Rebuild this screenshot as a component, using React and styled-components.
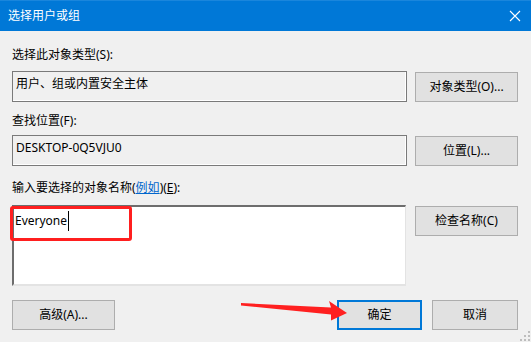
import React from "react";
import styled, { createGlobalStyle } from "styled-components";

const Global = createGlobalStyle`
  html, body { margin: 0; padding: 0; background: #f0f0f0; }
  * { box-sizing: border-box; }
`;

const FONT = `"Noto Sans", "Noto Sans CJK SC", sans-serif`;

const Window = styled.div`
  position: relative;
  width: 531px;
  height: 342px;
  overflow: hidden;
  background: #f0f0f0;
  font-family: ${FONT};
  font-size: 12px;
  color: #000;
`;

const TitleBar = styled.div`
  height: 31px;
  background: #0078d7;
  border-top: 1px solid #1a86dc;
  display: flex;
  align-items: center;
  justify-content: space-between;
  padding: 0 10px 0 8px;
`;

const Title = styled.span`
  color: #fff;
  font-size: 12px;
  line-height: 16px;
`;

const Body = styled.div`
  padding: 0 13px 0 12px;
  display: flex;
  flex-direction: column;
`;

const Label = styled.div`
  height: 16px;
  line-height: 16px;
  margin-top: ${(p) => p.$top}px;
  margin-bottom: ${(p) => p.$bottom}px;
  white-space: nowrap;
`;

const Link = styled.span`
  color: #0066cc;
  text-decoration: underline;
`;

const Key = styled.span`
  text-decoration: underline;
`;

const FieldRow = styled.div`
  display: grid;
  grid-template-columns: 395px 103px;
  column-gap: 8px;
  align-items: start;
`;

const ReadBox = styled.div`
  height: 31px;
  border: 1px solid #7a7a7a;
  box-shadow: inset -1px -1px 0 #ffffff;
  padding: 4px 3px 0 3px;
  line-height: 16px;
  white-space: nowrap;
`;

const Button = styled.div`
  height: 30px;
  margin-top: ${(p) => p.$mt || 0}px;
  width: ${(p) => (p.$w ? `${p.$w}px` : "auto")};
  background: #e1e1e1;
  border: ${(p) => (p.$primary ? "2px solid #0078d7" : "1px solid #adadad")};
  display: flex;
  align-items: center;
  justify-content: center;
  line-height: 16px;
  white-space: nowrap;
`;

const NameArea = styled.div`
  position: relative;
  width: 394px;
  height: 81px;
  background: #fff;
  border-top: 2px solid #6d6d6d;
  border-left: 2px solid #6d6d6d;
  border-right: 1px solid #e3e3e3;
  border-bottom: 2px solid #e3e3e3;
  padding: 6px 1px 0 1px;
  line-height: 16px;
  display: flex;
  align-items: flex-start;
`;

const Caret = styled.span`
  display: inline-block;
  width: 1px;
  height: 20px;
  background: #000;
  margin-left: 1px;
  margin-top: -2px;
`;

const Highlight = styled.div`
  position: absolute;
  left: -4px;
  top: -1px;
  width: 122px;
  height: 35px;
  border: 3px solid #ff1f1f;
  border-radius: 3px;
  pointer-events: none;
`;

const Footer = styled.div`
  margin-top: 14px;
  display: flex;
  align-items: center;
`;

const Spacer = styled.div`
  flex: 1;
`;

const Gap = styled.div`
  width: 10px;
`;

const Overlay = styled.svg`
  position: absolute;
  left: 0;
  top: 0;
  pointer-events: none;
`;

const Grip = styled.svg`
  position: absolute;
  right: 1px;
  bottom: 1px;
`;

export default function App() {
  return (
    <Window>
      <Global />
      <TitleBar>
        <Title>选择用户或组</Title>
        <svg width="12" height="12" viewBox="0 0 12 12">
          <path d="M1 1 L11 11 M11 1 L1 11" stroke="#fff" strokeWidth="1.1" />
        </svg>
      </TitleBar>
      <Body>
        <Label $top={16} $bottom={8}>选择此对象类型(S):</Label>
        <FieldRow>
          <ReadBox>用户、组或内置安全主体</ReadBox>
          <Button $mt={1}>对象类型(O)...</Button>
        </FieldRow>

        <Label $top={11} $bottom={6}>查找位置(F):</Label>
        <FieldRow>
          <ReadBox>DESKTOP-0Q5VJU0</ReadBox>
          <Button $mt={1}>位置(L)...</Button>
        </FieldRow>

        <Label $top={14} $bottom={9}>
          输入要选择的对象名称(<Link>例如</Link>)(<Key>E</Key>):
        </Label>
        <FieldRow>
          <NameArea>
            <span>Everyone</span>
            <Caret />
            <Highlight />
          </NameArea>
          <Button $mt={1}>检查名称(C)</Button>
        </FieldRow>

        <Footer>
          <Button $w={103}>高级(A)...</Button>
          <Spacer />
          <Button $w={85} $primary>确定</Button>
          <Gap />
          <Button $w={86}>取消</Button>
        </Footer>
      </Body>

      <Overlay width="531" height="342" viewBox="0 0 531 342">
        <polygon
          points="241,303 331,307.5 329,301 347,313 331,320.5 331,314.5 241,305.5"
          fill="#ff2020"
        />
      </Overlay>

      <Grip width="10" height="10" viewBox="0 0 10 10">
        <g fill="#bdbdbd">
          <rect x="8" y="0" width="2" height="2" />
          <rect x="8" y="4" width="2" height="2" />
          <rect x="4" y="4" width="2" height="2" />
          <rect x="8" y="8" width="2" height="2" />
          <rect x="4" y="8" width="2" height="2" />
          <rect x="0" y="8" width="2" height="2" />
        </g>
      </Grip>
    </Window>
  );
}
